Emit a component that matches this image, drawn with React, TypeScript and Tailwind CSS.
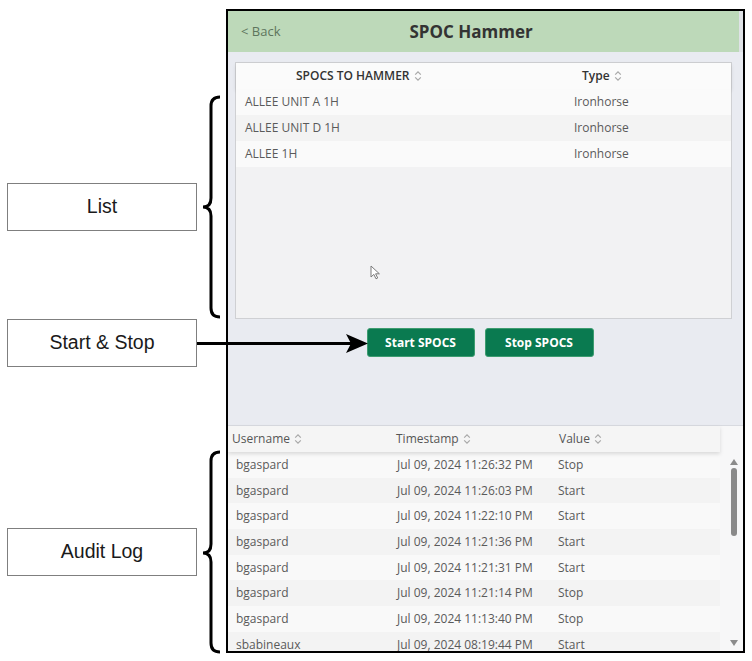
import React from 'react'

const listRows = [
  { name: 'ALLEE UNIT A 1H', type: 'Ironhorse' },
  { name: 'ALLEE UNIT D 1H', type: 'Ironhorse' },
  { name: 'ALLEE 1H', type: 'Ironhorse' },
]

const logRows = [
  { user: 'bgaspard', ts: 'Jul 09, 2024 11:26:32 PM', value: 'Stop' },
  { user: 'bgaspard', ts: 'Jul 09, 2024 11:26:03 PM', value: 'Start' },
  { user: 'bgaspard', ts: 'Jul 09, 2024 11:22:10 PM', value: 'Start' },
  { user: 'bgaspard', ts: 'Jul 09, 2024 11:21:36 PM', value: 'Start' },
  { user: 'bgaspard', ts: 'Jul 09, 2024 11:21:31 PM', value: 'Start' },
  { user: 'bgaspard', ts: 'Jul 09, 2024 11:21:14 PM', value: 'Stop' },
  { user: 'bgaspard', ts: 'Jul 09, 2024 11:13:40 PM', value: 'Stop' },
  { user: 'sbabineaux', ts: 'Jul 09, 2024 08:19:44 PM', value: 'Start' },
]

function SortIcon() {
  return (
    <svg width="8" height="12" viewBox="0 0 8 12" className="ml-[4px] inline-block">
      <path d="M1.2 4.6 L4 1.8 L6.8 4.6" stroke="#a8a8a8" strokeWidth="1.2" fill="none" />
      <path d="M1.2 7.4 L4 10.2 L6.8 7.4" stroke="#a8a8a8" strokeWidth="1.2" fill="none" />
    </svg>
  )
}

function Label(props: { text: string; className: string }) {
  return (
    <div
      className={`flex h-[48px] w-[190px] items-center justify-center border border-[#7f7f7f] bg-white text-[19.5px] text-[#1a1a1a] ${props.className}`}
    >
      {props.text}
    </div>
  )
}

export default function App() {
  return (
    <div
      className="relative flex h-[661px] w-[752px] overflow-hidden bg-white"
      style={{ fontFamily: '"Liberation Sans", Arial, sans-serif' }}
    >
      {/* callout labels */}
      <div className="flex w-[226px] shrink-0 flex-col pl-[7px]">
        <Label text="List" className="mt-[183px]" />
        <Label text="Start & Stop" className="mt-[88px]" />
        <Label text="Audit Log" className="mt-[161px]" />
      </div>

      {/* app window */}
      <div
        className="mt-[9px] flex h-[644px] w-[519px] shrink-0 flex-col overflow-hidden border-2 border-black bg-[#e9ebf1]"
        style={{ fontFamily: '"Open Sans", "Noto Sans", sans-serif' }}
      >
        <div className="flex h-[41px] shrink-0 items-center border-r-4 border-[#dfe2e6] bg-[#bdd9b9] pl-[13px]">
          <span className="text-[13px] text-[#5d755d]">&lt; Back</span>
          <span className="ml-[129px] text-[17px] font-bold text-[#333]">SPOC Hammer</span>
        </div>

        <div className="flex shrink-0 flex-col items-center pt-[10px] pb-[68px]">
          <div className="relative ml-[-4px] flex h-[257px] w-[497px] flex-col border border-[#cfd0d3] bg-[#f2f2f3]">
            <div className="grid h-[26px] shrink-0 grid-cols-[330px_1fr] items-center bg-[#fbfbfb] text-[12px] font-semibold text-[#333] shadow-[0_2px_4px_rgba(0,0,0,0.12)]">
              <div className="flex items-center pl-[60px]">
                SPOCS TO HAMMER
                <SortIcon />
              </div>
              <div className="flex items-center pl-[16px]">
                Type
                <SortIcon />
              </div>
            </div>
            {listRows.map((r, i) => (
              <div
                key={r.name}
                className={`grid h-[26px] grid-cols-[330px_1fr] items-center text-[12px] text-[#5a5a5a] ${
                  i % 2 === 1 ? 'bg-[#f3f3f3]' : 'bg-[#fafafa]'
                }`}
              >
                <div className="pl-[9px]">{r.name}</div>
                <div className="pl-[8px]">{r.type}</div>
              </div>
            ))}
            <svg width="11" height="15" viewBox="0 0 11 15" className="absolute top-[202px] left-[134px]">
              <path
                d="M1 1 L1 12 L3.8 9.4 L6 13.8 L7.7 13 L5.6 8.8 L9.4 8.8 Z"
                fill="#ffffff"
                stroke="#7a7a7a"
                strokeWidth="1"
                strokeLinejoin="round"
              />
            </svg>
          </div>

          <div className="mt-[9px] ml-[-11px] flex gap-[10px]">
            <button className="flex h-[29px] w-[108px] items-center justify-center rounded-[3px] border border-[#3d9c70] bg-[#0a7a50] text-[12px] font-bold text-white">
              Start SPOCS
            </button>
            <button className="flex h-[29px] w-[109px] items-center justify-center rounded-[3px] border border-[#3d9c70] bg-[#0a7a50] text-[12px] font-bold text-white">
              Stop SPOCS
            </button>
          </div>
        </div>

        <div className="flex min-h-0 flex-1 border-t border-[#d8dae0] bg-[#f7f7f8]">
          <div className="flex w-[492px] flex-col">
            <div className="relative z-10 grid h-[26px] shrink-0 grid-cols-[164px_163px_1fr] items-center bg-[#f5f5f5] text-[12px] text-[#555] shadow-[0_2px_4px_rgba(0,0,0,0.13)]">
              <div className="flex items-center pl-[4px]">
                Username
                <SortIcon />
              </div>
              <div className="flex items-center pl-[4px]">
                Timestamp
                <SortIcon />
              </div>
              <div className="flex items-center pl-[4px]">
                Value
                <SortIcon />
              </div>
            </div>
            {logRows.map((r, i) => (
              <div
                key={r.ts}
                className={`grid h-[25.7px] shrink-0 grid-cols-[164px_163px_1fr] items-center text-[12px] text-[#5a5a5a] ${
                  i % 2 === 1 ? 'bg-[#f3f3f3]' : 'bg-[#f9f9f9]'
                }`}
              >
                <div className="pl-[8px]">{r.user}</div>
                <div className="pl-[5px]">{r.ts}</div>
                <div className="pl-[3px]">{r.value}</div>
              </div>
            ))}
          </div>
          <div className="flex flex-1 flex-col items-center pt-[33px] pr-[2px] pl-[6px]">
            <svg width="8" height="6" viewBox="0 0 8 6">
              <path d="M0 6 L4 0 L8 6 Z" fill="#8c8c8c" />
            </svg>
            <div className="mt-[3px] h-[68px] w-[6px] rounded-[3px] bg-[#8a8a8a]" />
            <div className="flex-1" />
            <svg width="8" height="6" viewBox="0 0 8 6" className="mb-[5px]">
              <path d="M0 0 L8 0 L4 6 Z" fill="#8c8c8c" />
            </svg>
          </div>
        </div>
      </div>

      {/* braces and arrow */}
      <svg width="752" height="661" className="pointer-events-none absolute top-0 left-0">
        <path
          d="M220 97 Q211 97 211 106 L211 198 Q211 207 203 207 Q211 207 211 216 L211 308 Q211 317 220 317"
          stroke="#000"
          strokeWidth="3"
          fill="none"
        />
        <path
          d="M220 452 Q211 452 211 461 L211 544 Q211 553 203 553 Q211 553 211 562 L211 643 Q211 652 220 652"
          stroke="#000"
          strokeWidth="3"
          fill="none"
        />
        <line x1="197" y1="343.5" x2="352" y2="343.5" stroke="#000" strokeWidth="3" />
        <path d="M368 343.5 L346 334 L351 343.5 L346 353 Z" fill="#000" />
      </svg>
    </div>
  )
}
